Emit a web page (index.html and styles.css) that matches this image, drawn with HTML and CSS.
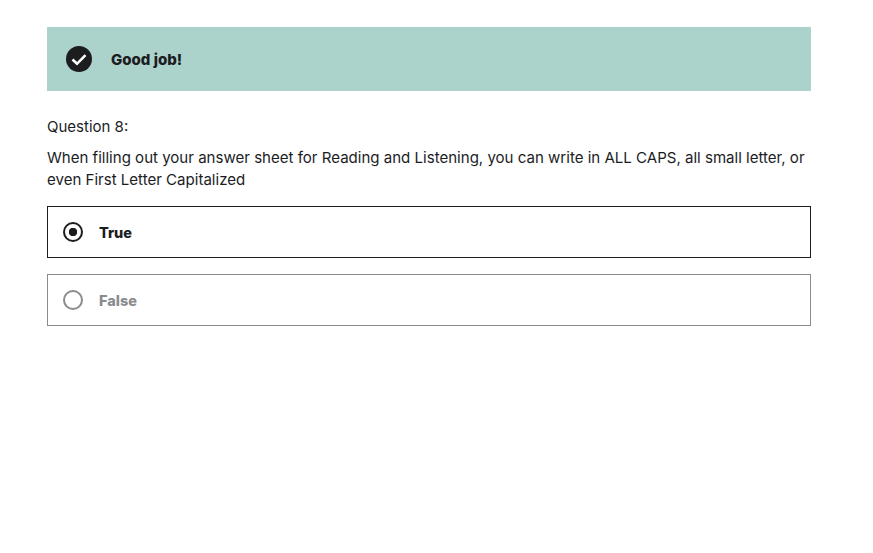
FILE: index.html
```html
<!DOCTYPE html>
<html lang="en">
<head>
    <meta charset="UTF-8">
    <title>Question 8</title>
    <link rel="stylesheet" href="styles.css">
</head>
<body>
    <div class="container">
        <div class="banner">
            <svg class="check" width="26" height="26" viewBox="0 0 26 26">
                <circle cx="13" cy="13" r="13" fill="#1c1d1f"/>
                <path d="M6.5 13.5l4.5 4.3 8.5-8.6" fill="none" stroke="#fff" stroke-width="2.6"/>
            </svg>
            <strong>Good job!</strong>
        </div>
        <p class="label">Question 8:</p>
        <p class="prompt">When filling out your answer sheet for Reading and Listening, you can write in ALL CAPS, all small letter, or even First Letter Capitalized</p>
        <div class="option selected">
            <span class="radio"></span>
            <strong>True</strong>
        </div>
        <div class="option">
            <span class="radio"></span>
            <strong>False</strong>
        </div>
    </div>
</body>
</html>
```

FILE: styles.css
```css
body {
    font-family: Inter, "Liberation Sans", sans-serif;
    margin: 0;
    background: #fff;
    color: #1c1d1f;
}
.container {
    width: 764px;
    padding: 27px 0 0 47px;
}
.banner {
    display: flex;
    align-items: center;
    gap: 19px;
    height: 64px;
    padding-left: 19px;
    background: #acd2cc;
    font-size: 15px;
    font-weight: 800;
}
.banner strong,
.option strong {
    font-weight: inherit;
}
.label {
    margin: 26px 0 0;
    font-size: 15px;
    line-height: 19px;
}
.prompt {
    margin: 11px 0 15px;
    font-size: 15.05px;
    line-height: 22px;
}
.option {
    display: flex;
    align-items: center;
    gap: 16px;
    box-sizing: border-box;
    height: 52px;
    margin-bottom: 16px;
    padding-left: 15px;
    border: 1px solid #8a8b8d;
    color: #8a8b8d;
    font-size: 14.5px;
    font-weight: 800;
}
.option.selected {
    border-color: #1c1d1f;
    color: #1c1d1f;
}
.radio {
    box-sizing: border-box;
    width: 20px;
    height: 20px;
    border: 2px solid currentColor;
    border-radius: 50%;
}
.option.selected .radio {
    border-width: 2.5px;
    background: radial-gradient(circle, #1c1d1f 0 4px, transparent 4.5px);
}
```
